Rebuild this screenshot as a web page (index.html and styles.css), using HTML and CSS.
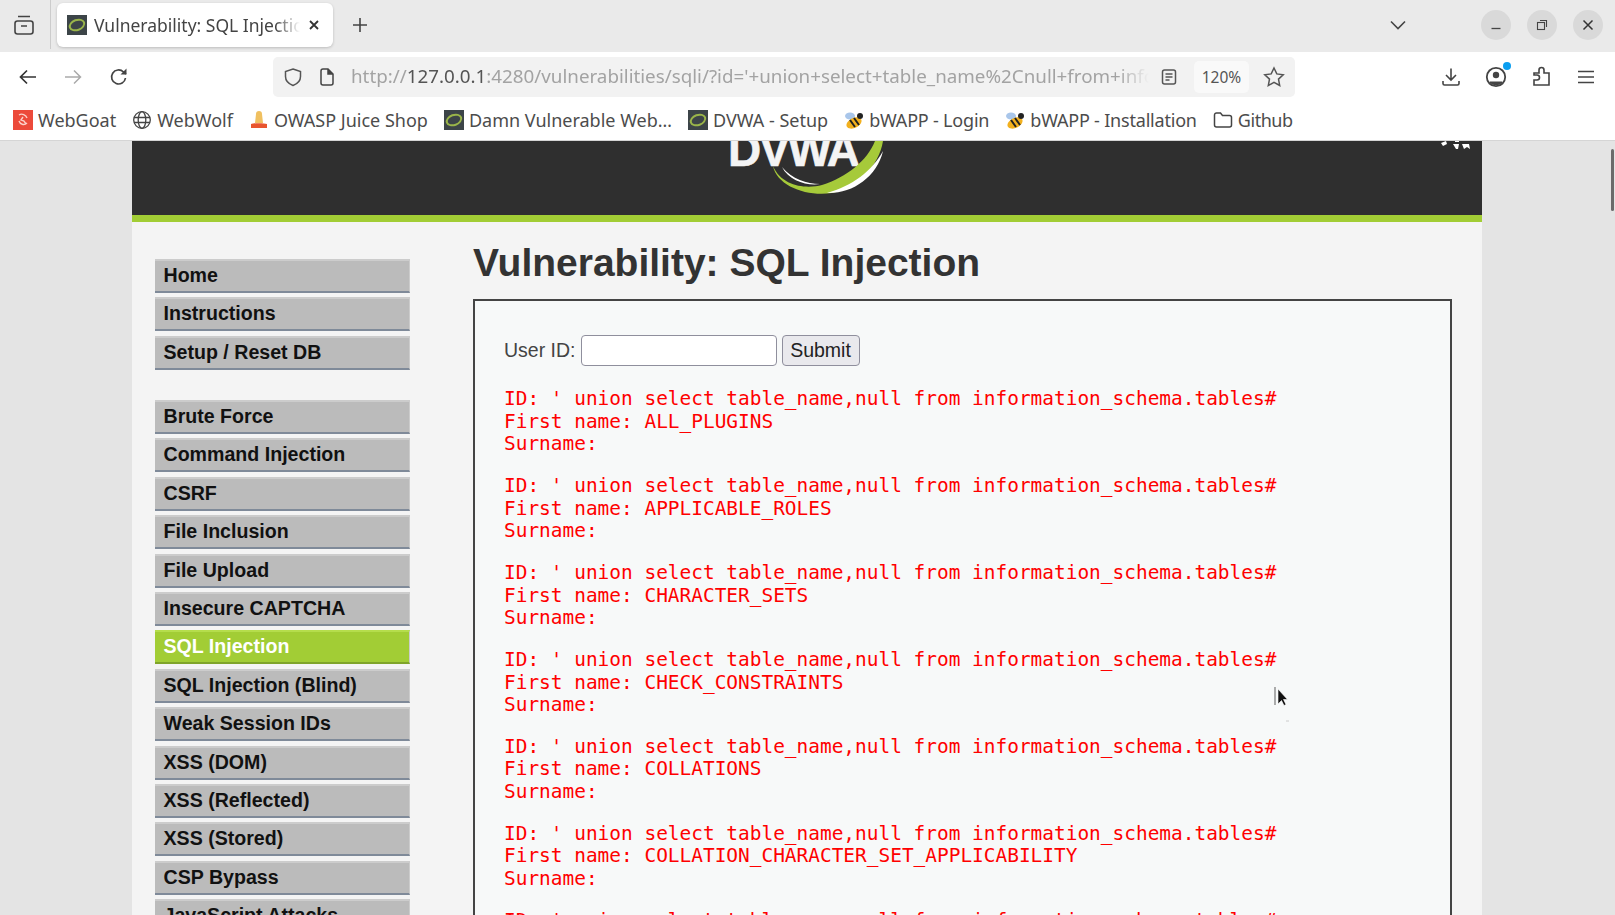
FILE: index.html
```html
<!DOCTYPE html>
<html lang="en">
<head>
  <meta charset="UTF-8">
  <title>Vulnerability: SQL Injection</title>
  <link rel="stylesheet" href="styles.css">
</head>
<body>
  <div class="tabbar">
    <div class="tab-list-btn">
      <svg width="22" height="22" viewBox="0 0 22 22" fill="none" stroke="#444" stroke-width="1.6"><rect x="2" y="7" width="18" height="13" rx="2.5"/><path d="M5 2.500h12M8 12h6"/></svg>
    </div>
    <div class="tab">
      <svg class="favicon" width="20" height="20" viewBox="0 0 20 20"><rect width="20" height="20" fill="#3c4448"/><ellipse cx="10" cy="10" rx="7.5" ry="5" fill="none" stroke="#9ab54a" stroke-width="2" transform="rotate(-20 10 10)"/></svg>
      <span class="tab-title">Vulnerability: SQL Injection</span>
      <svg width="14" height="14" viewBox="0 0 14 14" stroke="#333" stroke-width="1.8"><path d="M3 3l8 8M11 3l-8 8"/></svg>
    </div>
    <svg class="newtab" width="18" height="18" viewBox="0 0 18 18" stroke="#444" stroke-width="1.6"><path d="M9 2v14M2 9h14"/></svg>
    <div class="spacer"></div>
    <svg class="tabs-down" width="18" height="18" viewBox="0 0 18 18" fill="none" stroke="#444" stroke-width="1.6"><path d="M2 5.500l7 7 7-7"/></svg>
    <div class="winbtns">
      <div class="winbtn"><svg width="12" height="12" viewBox="0 0 12 12" stroke="#444" stroke-width="1.3"><path d="M1.500 9.500h9"/></svg></div>
      <div class="winbtn"><svg width="12" height="12" viewBox="0 0 12 12" fill="none" stroke="#444" stroke-width="1.1"><rect x="1.500" y="3.500" width="7" height="7"/><path d="M4 1.500h6.500V8"/></svg></div>
      <div class="winbtn"><svg width="12" height="12" viewBox="0 0 12 12" stroke="#333" stroke-width="1.5"><path d="M1.500 1.500l9 9M10.500 1.500l-9 9"/></svg></div>
    </div>
  </div>

  <div class="toolbar">
    <svg class="nav-back" width="20" height="20" viewBox="0 0 20 20" fill="none" stroke="#333" stroke-width="1.7"><path d="M18 10H2.500M9 3.500L2.500 10 9 16.500"/></svg>
    <svg class="nav-fwd" width="20" height="20" viewBox="0 0 20 20" fill="none" stroke="#aaa" stroke-width="1.5"><path d="M2 10h15.500M11 3.500l6.500 6.500-6.500 6.500"/></svg>
    <svg class="nav-reload" width="20" height="20" viewBox="0 0 20 20" fill="none" stroke="#444" stroke-width="1.7"><path d="M16.500 11a7 7 0 1 1-2-6l2.500 2"/><path d="M17.500 1.500v6h-6" fill="#444" stroke="none"/></svg>
    <div class="urlbar">
      <svg class="shield" width="20" height="20" viewBox="0 0 20 20" fill="none" stroke="#555" stroke-width="1.5"><path d="M10 2l7.500 2.500v5c0 4.500-3.500 7.500-7.500 9-4-1.500-7.500-4.500-7.500-9v-5z"/></svg>
      <svg class="page-icon" width="16" height="18" viewBox="0 0 16 18" fill="none" stroke="#444" stroke-width="1.5"><path d="M2 3a2 2 0 0 1 2-2h5l5 5v9a2 2 0 0 1-2 2H4a2 2 0 0 1-2-2z"/><path d="M9 1v5h5" fill="#444"/></svg>
      <div class="url"><span class="url-dim">http://</span><span class="url-host">127.0.0.1</span><span class="url-dim">:4280/vulnerabilities/sqli/?id='+union+select+table_name%2Cnull+from+information_schema.tables%23&amp;Submit=Submit#</span></div>
      <svg class="reader" width="16" height="18" viewBox="0 0 16 18" fill="none" stroke="#555" stroke-width="1.5"><rect x="1.500" y="2" width="13" height="14" rx="2"/><path d="M4.500 6h7M4.500 9h7M4.500 12h4"/></svg>
      <div class="zoom-level">120%</div>
      <svg class="star" width="22" height="22" viewBox="0 0 22 22" fill="none" stroke="#555" stroke-width="1.5"><path d="M11 2l2.800 5.900 6.400.8-4.700 4.400 1.200 6.400L11 16.400l-5.700 3.100 1.200-6.400L1.800 8.700l6.400-.8z"/></svg>
    </div>
    <div class="spacer"></div>
    <div class="tools">
      <svg width="20" height="20" viewBox="0 0 20 20" fill="none" stroke="#444" stroke-width="1.6"><path d="M10 1.500v11M5 8l5 5 5-5M2 14v2.500a1.500 1.500 0 0 0 1.500 1.500h13a1.500 1.500 0 0 0 1.500-1.500V14"/></svg>
      <div class="account">
        <svg width="22" height="22" viewBox="0 0 22 22"><circle cx="11" cy="11" r="9.200" fill="none" stroke="#444" stroke-width="1.8"/><circle cx="11" cy="9" r="3.200" fill="#444"/><path d="M5 15.500h12v1.500a9 9 0 0 1-12 0z" fill="#444"/></svg>
        <span class="account-dot"></span>
      </div>
      <svg width="20" height="22" viewBox="0 0 20 22" fill="none" stroke="#444" stroke-width="1.6"><path d="M2 8h5V5a2.500 2.500 0 0 1 5 0v3h5v12H2v-5h3a2.500 2.500 0 0 0 0-5H2z" transform="translate(0 -1)"/></svg>
      <svg width="20" height="18" viewBox="0 0 20 18" stroke="#444" stroke-width="1.6"><path d="M2 3.500h16M2 9h16M2 14.500h16"/></svg>
    </div>
  </div>

  <div class="bookmarks">
    <div class="bm"><svg width="20" height="20" viewBox="0 0 20 20"><rect width="20" height="20" fill="#ec4a3a"/><path d="M6 5c3-2 7 0 8 3M14 13c-3 3-7 1-8-2M10 7l-2 3 3 1 2 3" fill="none" stroke="#fbd0c8" stroke-width="1.4"/></svg>WebGoat</div>
    <div class="bm"><svg width="20" height="20" viewBox="0 0 20 20" fill="none" stroke="#444" stroke-width="1.3"><circle cx="10" cy="10" r="8.300"/><ellipse cx="10" cy="10" rx="3.800" ry="8.300"/><path d="M2 7.500h16M2 12.500h16"/></svg>WebWolf</div>
    <div class="bm"><svg width="20" height="20" viewBox="0 0 20 20"><path d="M7 4a3 3 0 0 1 6 0l1 9H6z" fill="#f0c060"/><path d="M2 14c3-1 13-1 16 0v4H2z" fill="#e8552e"/></svg>OWASP Juice Shop</div>
    <div class="bm"><svg width="20" height="20" viewBox="0 0 20 20"><rect width="20" height="20" fill="#3c4448"/><ellipse cx="10" cy="10" rx="7.500" ry="5" fill="none" stroke="#9ab54a" stroke-width="2" transform="rotate(-20 10 10)"/></svg>Damn Vulnerable Web…</div>
    <div class="bm"><svg width="20" height="20" viewBox="0 0 20 20"><rect width="20" height="20" fill="#3c4448"/><ellipse cx="10" cy="10" rx="7.500" ry="5" fill="none" stroke="#9ab54a" stroke-width="2" transform="rotate(-20 10 10)"/></svg>DVWA - Setup</div>
    <div class="bm bm-tight"><svg width="20" height="20" viewBox="0 0 20 20"><ellipse cx="6" cy="6" rx="5" ry="3.500" fill="#a9c6ea"/><ellipse cx="10" cy="13" rx="8" ry="5" fill="#f2b01e" transform="rotate(-25 10 13)"/><path d="M6 10l5 7M10 8l5 7" stroke="#222" stroke-width="2"/><circle cx="16" cy="6" r="3" fill="#222"/></svg>bWAPP - Login</div>
    <div class="bm bm-tight"><svg width="20" height="20" viewBox="0 0 20 20"><ellipse cx="6" cy="6" rx="5" ry="3.500" fill="#a9c6ea"/><ellipse cx="10" cy="13" rx="8" ry="5" fill="#f2b01e" transform="rotate(-25 10 13)"/><path d="M6 10l5 7M10 8l5 7" stroke="#222" stroke-width="2"/><circle cx="16" cy="6" r="3" fill="#222"/></svg>bWAPP - Installation</div>
    <div class="bm bm-tighter"><svg width="20" height="18" viewBox="0 0 20 18" fill="none" stroke="#444" stroke-width="1.5"><path d="M1.500 4a2 2 0 0 1 2-2h4l2 2.500h7a2 2 0 0 1 2 2V14a2 2 0 0 1-2 2h-13a2 2 0 0 1-2-2z"/></svg>Github</div>
  </div>

  <div class="viewport">
    <div class="wrapper">
      <div class="header">
        <div class="logo">
          <span class="logo-text">DVWA</span>
          <svg class="logo-swoosh" width="180" height="74" viewBox="0 0 180 74">
            <path d="M56 25C60 45 90 56 115 52 140 48 162 25 166 0L158 0C150 20 130 36 105 44 90 48 65 46 56 25Z" fill="#a6ca3a"/>
            <path d="M110 52C135 53 160 36 166 10 155 30 135 45 110 52Z" fill="#fff"/>
            <path d="M65 26C72 40 90 45 103 43 90 43 75 38 65 26Z" fill="#fff"/>
          </svg>
        </div>
        <svg class="header-stars" width="30" height="10" viewBox="0 0 30 10" fill="#fff"><path d="M0 2l5-2 1 3-4 2zM12 3l6 0-1 5h-2zM21 3l7 0 1 5-3-2-3 2zM14 0h4v1h-4z"/></svg>
      </div>
      <div class="columns">
        <div class="menu">
          <ul class="menu-group">
            <li class="menu-item">Home</li>
            <li class="menu-item">Instructions</li>
            <li class="menu-item">Setup / Reset DB</li>
          </ul>
          <ul class="menu-group">
            <li class="menu-item">Brute Force</li>
            <li class="menu-item">Command Injection</li>
            <li class="menu-item">CSRF</li>
            <li class="menu-item">File Inclusion</li>
            <li class="menu-item">File Upload</li>
            <li class="menu-item">Insecure CAPTCHA</li>
            <li class="menu-item selected">SQL Injection</li>
            <li class="menu-item">SQL Injection (Blind)</li>
            <li class="menu-item">Weak Session IDs</li>
            <li class="menu-item">XSS (DOM)</li>
            <li class="menu-item">XSS (Reflected)</li>
            <li class="menu-item">XSS (Stored)</li>
            <li class="menu-item">CSP Bypass</li>
            <li class="menu-item">JavaScript Attacks</li>
          </ul>
        </div>
        <div class="content">
          <h1>Vulnerability: SQL Injection</h1>
          <div class="vulnerable-code">
            <form class="user-form">
              <label for="uid">User ID:</label>
              <input id="uid" type="text">
              <button type="button">Submit</button>
            </form>
            <pre>ID: ' union select table_name,null from information_schema.tables#
First name: ALL_PLUGINS
Surname: </pre>
            <pre>ID: ' union select table_name,null from information_schema.tables#
First name: APPLICABLE_ROLES
Surname: </pre>
            <pre>ID: ' union select table_name,null from information_schema.tables#
First name: CHARACTER_SETS
Surname: </pre>
            <pre>ID: ' union select table_name,null from information_schema.tables#
First name: CHECK_CONSTRAINTS
Surname: </pre>
            <pre>ID: ' union select table_name,null from information_schema.tables#
First name: COLLATIONS
Surname: </pre>
            <pre>ID: ' union select table_name,null from information_schema.tables#
First name: COLLATION_CHARACTER_SET_APPLICABILITY
Surname: </pre>
            <pre>ID: ' union select table_name,null from information_schema.tables#
First name: COLUMNS
Surname: </pre>
          </div>
        </div>
      </div>
    </div>
    <div class="scrollbar"><div class="scroll-thumb"></div></div>
    <svg class="cursor" width="18" height="36" viewBox="0 0 18 36">
      <path d="M1 0v18" stroke="#777" stroke-width="1.2"/>
      <path d="M4 2v15l3.500-3.500 2.500 5 2-1-2.500-5h4z" fill="#111" stroke="#fff" stroke-width=".6"/>
      <path d="M12 34h3" stroke="#ccc"/>
    </svg>
  </div>
</body>
</html>
```

FILE: styles.css
```css
* {
  margin: 0;
  padding: 0;
  box-sizing: border-box;
}

html, body {
  height: 100%;
  overflow: hidden;
}

body {
  font-family: "Liberation Sans", Arial, sans-serif;
  background-color: #fff;
  display: flex;
  flex-direction: column;
}

/* browser chrome */
.tabbar {
  height: 52px;
  padding-bottom: 3px;
  background-color: #eaeaea;
  display: flex;
  align-items: center;
  flex-shrink: 0;
}

.tab-list-btn {
  width: 51px;
  height: 49px;
  padding-right: 3px;
  display: flex;
  align-items: center;
  justify-content: center;
  border-right: 1px solid #ccc;
}

.tab {
  width: 276px;
  height: 44px;
  margin-left: 6px;
  background-color: #fff;
  border-radius: 6px;
  box-shadow: 0 1px 3px rgba(0, 0, 0, 0.2);
  display: flex;
  align-items: center;
  padding: 0 12px 0 10px;
  gap: 7px;
}

.favicon {
  flex-shrink: 0;
}

.tab-title {
  flex: 1;
  font-family: "Noto Sans", sans-serif;
  font-size: 17.5px;
  color: #444;
  white-space: nowrap;
  overflow: hidden;
  -webkit-mask-image: linear-gradient(to right, #000 88%, transparent);
  mask-image: linear-gradient(to right, #000 88%, transparent);
}

.newtab {
  margin-left: 18px;
}

.spacer {
  flex: 1;
}

.tabs-down {
  margin-right: 74px;
}

.winbtns {
  display: flex;
  gap: 16px;
  margin-right: 12px;
}

.winbtn {
  width: 30px;
  height: 30px;
  border-radius: 50%;
  background-color: #d9d9d9;
  display: flex;
  align-items: center;
  justify-content: center;
}

.toolbar {
  height: 49px;
  background-color: #fff;
  display: flex;
  align-items: center;
  flex-shrink: 0;
}

.nav-back {
  margin-left: 18px;
}

.nav-fwd {
  margin-left: 25px;
}

.nav-reload {
  margin-left: 26px;
}

.urlbar {
  width: 1022px;
  height: 40px;
  margin-left: 144px;
  background-color: #f2f2f2;
  border-radius: 5px;
  display: flex;
  align-items: center;
  padding: 0 10px 0 10px;
}

.shield {
  flex-shrink: 0;
}

.page-icon {
  margin-left: 16px;
  flex-shrink: 0;
}

.url {
  flex: 1;
  margin-left: 16px;
  padding-bottom: 1px;
  font-family: "Noto Sans", sans-serif;
  font-size: 18.8px;
  white-space: nowrap;
  overflow: hidden;
  -webkit-mask-image: linear-gradient(to right, #000 96%, transparent);
  mask-image: linear-gradient(to right, #000 96%, transparent);
}

.url-dim {
  color: #a3a3a3;
}

.url-host {
  color: #555;
}

.reader {
  margin-left: 12px;
  flex-shrink: 0;
}

.zoom-level {
  margin-left: 17px;
  width: 55px;
  height: 32px;
  background-color: #f9f9f9;
  border-radius: 5px;
  font-family: "Noto Sans", sans-serif;
  font-size: 15.5px;
  color: #555;
  display: flex;
  align-items: center;
  justify-content: center;
}

.star {
  margin-left: 14px;
  flex-shrink: 0;
}

.tools {
  display: flex;
  align-items: center;
  gap: 24px;
  margin-right: 19px;
}

.account {
  position: relative;
  height: 22px;
  margin-right: 1px;
}

.account-dot {
  position: absolute;
  top: -4px;
  right: -4px;
  width: 8px;
  height: 8px;
  border-radius: 50%;
  background-color: #0a9ef0;
}

.bookmarks {
  height: 40px;
  padding-bottom: 2px;
  background-color: #fff;
  border-bottom: 1px solid #d5d5d5;
  display: flex;
  align-items: center;
  padding-left: 13px;
  gap: 16px;
  flex-shrink: 0;
}

.bm {
  display: flex;
  align-items: center;
  gap: 5px;
  font-family: "Noto Sans", sans-serif;
  font-size: 18px;
  color: #4c4c4c;
  white-space: nowrap;
}

.bm-tight {
  letter-spacing: -0.2px;
}

.bm-tighter {
  letter-spacing: -0.45px;
}

/* page */
.viewport {
  flex: 1;
  min-height: 0;
  position: relative;
  background-color: #e4e4e4;
  overflow: hidden;
}

.wrapper {
  width: 1350px;
  margin-left: 132px;
  background-color: #f4f4f4;
}

.header {
  height: 81px;
  background-color: #2f2f2f;
  border-bottom: 7px solid #a2cd35;
  position: relative;
  display: flex;
  justify-content: center;
  overflow: hidden;
}

.logo {
  position: relative;
  width: 180px;
  height: 74px;
  overflow: hidden;
}

.logo-text {
  position: absolute;
  left: 11px;
  top: -18px;
  font-size: 46px;
  font-weight: bold;
  color: #f4f4f4;
  letter-spacing: -2px;
  -webkit-text-stroke: 0.6px #f4f4f4;
}

.logo-swoosh {
  position: absolute;
  left: 0;
  top: 0;
}

.header-stars {
  position: absolute;
  top: 0;
  right: 11px;
}

.columns {
  display: flex;
  padding: 0 30px 0 23px;
}

.menu {
  width: 255px;
  padding-top: 37px;
  flex-shrink: 0;
}

.menu-group {
  list-style: none;
  margin-bottom: 30.3px;
}

.menu-item {
  height: 34px;
  margin-bottom: 4.4px;
  padding-left: 8.5px;
  background-color: #bbb;
  border-top: 2px solid #ccc;
  border-bottom: 2px solid #7f8a99;
  border-right: 1px solid #ccc;
  font-size: 19.6px;
  font-weight: bold;
  line-height: 28px;
  color: #111;
}

.menu-item.selected {
  background-color: #a2cd35;
  border-top-color: #b5dd4c;
  border-bottom-color: #7fa42a;
  color: #fff;
}

.content {
  flex: 1;
  margin-left: 63px;
}

h1 {
  font-size: 39px;
  font-weight: bold;
  color: #333;
  line-height: 44px;
  margin-top: 19px;
  margin-bottom: 14px;
}

.vulnerable-code {
  border: 2px solid #444;
  background-color: #f7f9f9;
  padding: 33px 30px 0 29px;
  height: 900px;
}

.user-form {
  display: flex;
  align-items: center;
  height: 32px;
  margin-bottom: 22px;
  font-size: 19.5px;
  color: #444;
}

.user-form label {
  margin-right: 5px;
}

.user-form input {
  width: 196px;
  height: 31px;
  border: 1px solid #8f8f9d;
  border-radius: 4px;
  background-color: #fff;
}

.user-form button {
  height: 31px;
  width: 78px;
  margin-left: 5px;
  border: 1px solid #8f8f9d;
  border-radius: 4px;
  background-color: #e9e9ed;
  font-family: inherit;
  font-size: 19.5px;
  color: #222;
}

pre {
  font-family: "DejaVu Sans Mono", monospace;
  font-size: 19.45px;
  line-height: 22.6px;
  color: #ff0000;
  margin-bottom: 19.2px;
}

.scrollbar {
  position: absolute;
  top: 0;
  right: 0;
  bottom: 0;
  width: 14px;
}

.scroll-thumb {
  position: absolute;
  top: 8px;
  right: 1px;
  width: 3px;
  height: 62px;
  border-radius: 2px;
  background-color: #6b6b6b;
}

.cursor {
  position: absolute;
  left: 1274px;
  top: 546px;
}
```
